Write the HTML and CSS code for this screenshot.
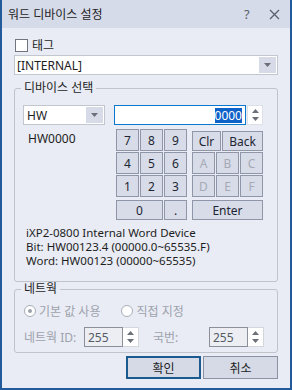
FILE: index.html
```html
<!DOCTYPE HTML>
<html>

<head>
  <meta charset="utf-8">
  <title>워드 디바이스 설정</title>
  <link rel="stylesheet" href="styles.css">
</head>

<body>
  <div class="window">
    <div class="titlebar">
      <span class="title">워드 디바이스 설정</span>
      <span class="help">?</span>
      <span class="close">
        <svg width="11" height="11" viewBox="0 0 11 11"><path d="M1 1L10 10M10 1L1 10" stroke="#5a5f6b" stroke-width="1.3" fill="none" /></svg>
      </span>
    </div>

    <div class="content">
      <label class="tag-row"><span class="check"></span>태그</label>
      <div class="combo combo-wide">
        <span class="combo-text">[INTERNAL]</span>
        <span class="drop"><svg width="7" height="4" viewBox="0 0 7 4"><path d="M0 0H7L3.5 4Z" fill="#6b6f78" /></svg></span>
      </div>

      <fieldset class="group device-group">
        <legend>디바이스 선택</legend>
        <div class="device-row">
          <div class="left-col">
            <div class="combo combo-small">
              <span class="combo-text">HW</span>
              <span class="drop"><svg width="7" height="4" viewBox="0 0 7 4"><path d="M0 0H7L3.5 4Z" fill="#6b6f78" /></svg></span>
            </div>
            <div class="device-name">HW0000</div>
          </div>
          <div class="right-col">
            <div class="num-input">
              <div class="num-field"><span class="sel">0000</span></div>
              <div class="spin">
                <svg width="7" height="4" viewBox="0 0 7 4"><path d="M0 4H7L3.5 0Z" fill="#6b6f78" /></svg>
                <svg width="7" height="4" viewBox="0 0 7 4"><path d="M0 0H7L3.5 4Z" fill="#6b6f78" /></svg>
              </div>
            </div>
            <div class="keypad">
              <button class="key">7</button>
              <button class="key">8</button>
              <button class="key">9</button>
              <span class="gap"></span>
              <div class="key-pair">
                <button class="key key-clr">Clr</button>
                <button class="key key-back">Back</button>
              </div>
              <button class="key">4</button>
              <button class="key">5</button>
              <button class="key">6</button>
              <span class="gap"></span>
              <button class="key off">A</button>
              <button class="key off">B</button>
              <button class="key off">C</button>
              <button class="key">1</button>
              <button class="key">2</button>
              <button class="key">3</button>
              <span class="gap"></span>
              <button class="key off">D</button>
              <button class="key off">E</button>
              <button class="key off">F</button>
              <button class="key key-zero">0</button>
              <button class="key">.</button>
              <span class="gap"></span>
              <button class="key key-enter">Enter</button>
            </div>
          </div>
        </div>
        <div class="info">
          <div>iXP2-0800 Internal Word Device</div>
          <div>Bit: HW00123.4 (00000.0~65535.F)</div>
          <div>Word: HW00123 (00000~65535)</div>
        </div>
      </fieldset>

      <fieldset class="group net-group">
        <legend>네트웍</legend>
        <div class="radio-row">
          <label class="radio"><span class="dot on"></span>기본 값 사용</label>
          <label class="radio"><span class="dot"></span>직접 지정</label>
        </div>
        <div class="id-row">
          <span class="id-label">네트웍 ID:</span>
          <div class="spinbox">
            <span class="spin-val">255</span>
            <span class="spin-btn">
              <svg width="7" height="4" viewBox="0 0 7 4"><path d="M0 4H7L3.5 0Z" fill="#6b6f78" /></svg>
              <svg width="7" height="4" viewBox="0 0 7 4"><path d="M0 0H7L3.5 4Z" fill="#6b6f78" /></svg>
            </span>
          </div>
          <span class="id-label station">국번:</span>
          <div class="spinbox">
            <span class="spin-val">255</span>
            <span class="spin-btn">
              <svg width="7" height="4" viewBox="0 0 7 4"><path d="M0 4H7L3.5 0Z" fill="#6b6f78" /></svg>
              <svg width="7" height="4" viewBox="0 0 7 4"><path d="M0 0H7L3.5 4Z" fill="#6b6f78" /></svg>
            </span>
          </div>
        </div>
      </fieldset>

      <div class="actions">
        <button class="btn btn-ok">확인</button>
        <button class="btn">취소</button>
      </div>
    </div>
  </div>
</body>

</html>
```

FILE: styles.css
```css
body {
  margin: 0;
  font-family: 'Noto Sans', 'Noto Sans CJK KR', sans-serif;
  font-size: 12px;
  color: #1e1e1e;
  background-color: #e9ecf4;
}

.window {
  width: 292px;
  height: 390px;
  box-sizing: border-box;
  border: 2px solid #235a9c;
  border-top: none;
  background-color: #e9ecf4;
}

.titlebar {
  height: 28px;
  display: flex;
  align-items: center;
  padding-left: 6px;
  background-color: #d6dbe9;
}

.title {
  flex: 1;
  font-size: 12px;
  color: #1e1e1e;
}

.help {
  width: 25px;
  font-size: 13px;
  color: #5a5f6b;
}

.close {
  width: 21px;
  display: flex;
  align-items: center;
}

.content {
  padding: 10px 12px 0;
}

.tag-row {
  height: 14px;
  display: flex;
  align-items: center;
  gap: 4px;
}

.check {
  width: 11px;
  height: 11px;
  margin-left: 1px;
  border: 1px solid #707580;
  background-color: #fff;
}

.combo {
  height: 20px;
  box-sizing: border-box;
  display: flex;
  align-items: center;
  border: 1px solid #c2c6ce;
  background-color: #fff;
}

.combo-wide {
  margin-top: 3px;
}

.combo-text {
  flex: 1;
  padding-left: 2px;
}

.drop {
  width: 17px;
  height: 16px;
  margin-right: 1px;
  display: flex;
  align-items: center;
  justify-content: center;
  background-color: #d6dbe7;
}

.group {
  margin: 6px 0 0;
  padding: 0;
  border: 1px solid #bfc3cc;
  border-radius: 3px;
}

.group legend {
  margin-left: 6px;
  padding: 0 3px;
  line-height: 14px;
}

.device-row {
  display: flex;
  gap: 9px;
  padding: 10px 0 0 8px;
}

.left-col {
  width: 82px;
}

.combo-small .combo-text {
  padding-left: 3px;
}

.device-name {
  margin: 5px 0 0 5px;
}

.num-input {
  display: flex;
  align-items: stretch;
  height: 20px;
}

.num-field {
  width: 132px;
  box-sizing: border-box;
  display: flex;
  align-items: center;
  justify-content: flex-end;
  padding-right: 3px;
  border: 1px solid #0b78d0;
  background-color: #fff;
}

.sel {
  background-color: #0f62c8;
  color: #fff;
  line-height: 15px;
}

.spin {
  width: 14px;
  margin-left: 1px;
  display: flex;
  flex-direction: column;
  justify-content: center;
  align-items: center;
  gap: 4px;
  border: 1px solid #dde0e6;
  background-color: #fff;
}

.keypad {
  margin: 4px 0 0 2px;
  display: grid;
  grid-template-columns: repeat(3, 23px) 3px repeat(3, 23px);
  grid-template-rows: 22px 22px 22px 22px;
  gap: 1px;
}

.keypad .key:nth-last-child(-n+4) {
  margin-top: 2px;
}

.key {
  padding: 0;
  font-family: inherit;
  font-size: 12px;
  color: #1e2633;
  border: 1px solid #8e96a7;
  background-color: #d7dce8;
}

.key.off {
  color: #a5aab5;
}

.key-pair {
  grid-column: 5 / 8;
  display: flex;
  gap: 1px;
}

.key-clr {
  width: 29px;
}

.key-back {
  flex: 1;
}

.key-zero {
  grid-column: 1 / 3;
}

.key-enter {
  grid-column: 5 / 8;
}

.info {
  padding: 6px 0 13px 11px;
  font-size: 11.5px;
  line-height: 14px;
}

.net-group {
  margin-top: 0;
}

.radio-row {
  display: flex;
  gap: 21px;
  padding: 6px 0 0 9px;
  color: #9da2ad;
}

.radio {
  display: flex;
  align-items: center;
  gap: 3px;
}

.dot {
  width: 10px;
  height: 10px;
  border: 1px solid #a8adb8;
  border-radius: 50%;
  background-color: #fff;
  display: flex;
  align-items: center;
  justify-content: center;
}

.dot.on::after {
  content: '';
  width: 4px;
  height: 4px;
  border-radius: 50%;
  background-color: #9da2ad;
}

.id-row {
  display: flex;
  align-items: center;
  padding: 7px 0 5px 9px;
}

.id-label {
  width: 60px;
  white-space: nowrap;
  color: #9da2ad;
}

.id-label.station {
  width: 56px;
  margin-left: 14px;
}

.spinbox {
  height: 20px;
  display: flex;
}

.spin-val {
  width: 39px;
  box-sizing: border-box;
  padding-left: 3px;
  display: flex;
  align-items: center;
  color: #555a64;
  border: 1px solid #8a8f99;
  background-color: #eceef3;
}

.spin-btn {
  width: 16px;
  box-sizing: border-box;
  display: flex;
  flex-direction: column;
  justify-content: center;
  align-items: center;
  gap: 4px;
  border: 1px solid #d3d6dd;
  border-left: none;
  background-color: #fff;
}

.actions {
  display: flex;
  justify-content: flex-end;
  gap: 2px;
  margin-top: 3px;
}

.btn {
  width: 75px;
  height: 23px;
  padding: 0;
  font-family: inherit;
  font-size: 12px;
  color: #1e1e1e;
  border: 1px solid #8a92a3;
  background-color: #d5dae6;
}

.btn-ok {
  border: 2px solid #1a5a8e;
}
```
